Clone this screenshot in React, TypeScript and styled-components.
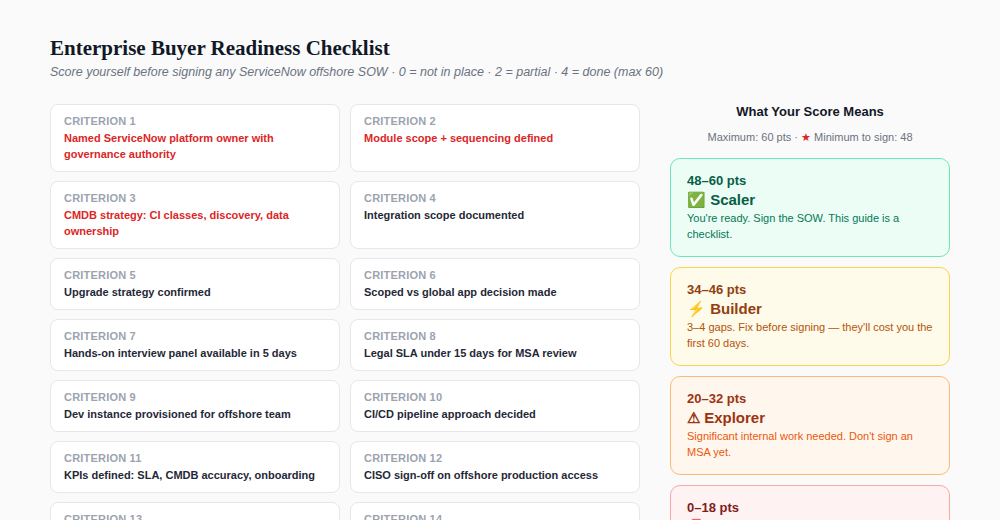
import React from "react";
import styled, { createGlobalStyle } from "styled-components";

const Global = createGlobalStyle`
  body { margin: 0; background: #fafafa; font-family: "Liberation Sans", Arial, sans-serif; }
`;

const Page = styled.div`
  width: 900px;
  margin: 0 auto;
  padding: 36px 0 40px;
`;
const Title = styled.h1`
  font-family: "Liberation Serif", "Times New Roman", serif;
  font-size: 21px;
  font-weight: 700;
  color: #111827;
  margin: 0;
  line-height: 24px;
`;
const Sub = styled.p`
  font-size: 12.5px;
  font-style: italic;
  color: #6b7280;
  margin: 4px 0 0;
  line-height: 16px;
`;
const Layout = styled.div`
  display: grid;
  grid-template-columns: 590px 280px;
  gap: 30px;
  margin-top: 24px;
  align-items: start;
`;
const Grid = styled.div`
  display: grid;
  grid-template-columns: 1fr 1fr;
  gap: 9px 10px;
`;
const Card = styled.div`
  background: #fff;
  border: 1px solid #e5e7eb;
  border-radius: 8px;
  padding: 9px 13px 9px;
`;
const Label = styled.div`
  font-size: 11px;
  font-weight: 700;
  color: #9ca3af;
  line-height: 15px;
  letter-spacing: 0.2px;
  margin-bottom: 1px;
`;
const CTitle = styled.div<{ $red?: boolean }>`
  font-size: 11px;
  font-weight: 700;
  line-height: 16px;
  color: ${(p) => (p.$red ? "#dc2626" : "#1f2937")};
`;
const Side = styled.div`
  display: flex;
  flex-direction: column;
`;
const SideHead = styled.div`
  text-align: center;
  font-size: 13px;
  font-weight: 700;
  color: #111827;
  line-height: 16px;
`;
const SideSub = styled.div`
  text-align: center;
  font-size: 11px;
  color: #6b7280;
  margin: 10px 0 14px;
  line-height: 14px;
`;
const Star = styled.span`color: #dc2626;`;
const Tiers = styled.div`
  display: flex;
  flex-direction: column;
  gap: 10px;
`;
type Tone = { bg: string; bd: string; tx: string; ds: string };
const Tier = styled.div<{ $t: Tone }>`
  background: ${(p) => p.$t.bg};
  border: 1px solid ${(p) => p.$t.bd};
  border-radius: 10px;
  padding: 14px 16px 14px;
  color: ${(p) => p.$t.tx};
`;
const Range = styled.div`
  font-size: 13px;
  font-weight: 700;
  line-height: 16px;
`;
const Name = styled.div`
  font-size: 15px;
  font-weight: 700;
  line-height: 20px;
  margin-top: 1px;
`;
const Desc = styled.div<{ $c: string }>`
  font-size: 11px;
  line-height: 16px;
  color: ${(p) => p.$c};
`;

const crit: [string, boolean][] = [
  ["Named ServiceNow platform owner with governance authority", true],
  ["Module scope + sequencing defined", true],
  ["CMDB strategy: CI classes, discovery, data ownership", true],
  ["Integration scope documented", false],
  ["Upgrade strategy confirmed", false],
  ["Scoped vs global app decision made", false],
  ["Hands-on interview panel available in 5 days", false],
  ["Legal SLA under 15 days for MSA review", false],
  ["Dev instance provisioned for offshore team", false],
  ["CI/CD pipeline approach decided", false],
  ["KPIs defined: SLA, CMDB accuracy, onboarding", false],
  ["CISO sign-off on offshore production access", false],
  ["Budget approved for full engagement term", false],
  ["Knowledge transfer plan agreed", false],
  ["Executive sponsor committed to weekly reviews", false],
];

const tiers: { r: string; n: string; d: string; t: Tone }[] = [
  { r: "48–60 pts", n: "✅ Scaler", d: "You're ready. Sign the SOW. This guide is a checklist.", t: { bg: "#ecfdf5", bd: "#6ee7b7", tx: "#065f46", ds: "#047857" } },
  { r: "34–46 pts", n: "⚡ Builder", d: "3–4 gaps. Fix before signing — they'll cost you the first 60 days.", t: { bg: "#fffbeb", bd: "#fcd34d", tx: "#92400e", ds: "#b45309" } },
  { r: "20–32 pts", n: "⚠ Explorer", d: "Significant internal work needed. Don't sign an MSA yet.", t: { bg: "#fff7ed", bd: "#fdba74", tx: "#9a3412", ds: "#ea580c" } },
  { r: "0–18 pts", n: "🛑 Not Ready", d: "Foundational gaps. Resolve ownership and scope before engaging vendors.", t: { bg: "#fef2f2", bd: "#fca5a5", tx: "#7f1d1d", ds: "#b91c1c" } },
];

export default function App() {
  return (
    <>
      <Global />
      <Page>
        <Title>Enterprise Buyer Readiness Checklist</Title>
        <Sub>Score yourself before signing any ServiceNow offshore SOW · 0 = not in place · 2 = partial · 4 = done (max 60)</Sub>
        <Layout>
          <Grid>
            {crit.map(([t, red], i) => (
              <Card key={i}>
                <Label>CRITERION {i + 1}</Label>
                <CTitle $red={red}>{t}</CTitle>
              </Card>
            ))}
          </Grid>
          <Side>
            <SideHead>What Your Score Means</SideHead>
            <SideSub>Maximum: 60 pts · <Star>★</Star> Minimum to sign: 48</SideSub>
            <Tiers>
              {tiers.map((x) => (
                <Tier key={x.r} $t={x.t}>
                  <Range>{x.r}</Range>
                  <Name>{x.n}</Name>
                  <Desc $c={x.t.ds}>{x.d}</Desc>
                </Tier>
              ))}
            </Tiers>
          </Side>
        </Layout>
      </Page>
    </>
  );
}
